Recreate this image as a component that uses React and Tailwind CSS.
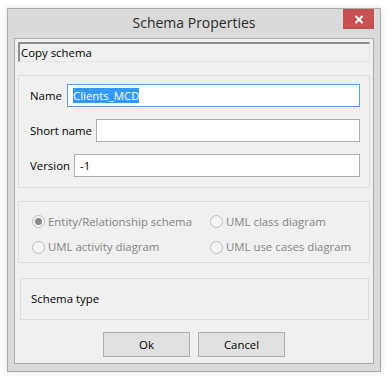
import React from "react";

const font = "font-['Open_Sans','Noto_Sans',sans-serif]";

function Radio({ checked, label }) {
  return (
    <div className="flex items-center h-[21px]">
      <span className="w-[13px] h-[13px] rounded-full border border-[#bcbcbc] bg-[#f4f4f4] flex items-center justify-center shrink-0">
        {checked && <span className="w-[7px] h-[7px] rounded-full bg-[#8a8a8a]" />}
      </span>
      <span className="ml-[3px] text-[#838383] text-[11.4px] leading-none">{label}</span>
    </div>
  );
}

export default function App() {
  return (
    <div className={`w-[388px] h-[378px] bg-white pt-[8px] pl-[7px] ${font}`}>
      <div className="w-[374px] h-[364px] border border-[#aaaaaa] bg-[#dadada] flex flex-col shadow-[0_0_6px_rgba(0,0,0,0.12)]">
        <div className="relative h-[29px] flex items-center justify-center shrink-0">
          <span className="text-[14px] text-[#2b2b2b] leading-none -mt-[1px]">Schema Properties</span>
          <div className="absolute top-0 right-[6px] w-[31px] h-[20px] bg-[#c75050] flex items-center justify-center">
            <svg width="10" height="9" viewBox="0 0 10 9">
              <path d="M1.5 1 L8.5 8 M8.5 1 L1.5 8" stroke="white" strokeWidth="2" />
            </svg>
          </div>
        </div>
        <div className="mx-[6px] mb-[7px] flex-1 border border-[#acacac] bg-[#f0f0f0] flex flex-col pt-[3px] px-[3px] text-[11.4px]">
          <div className="h-[20px] border-t-2 border-l-2 border-t-[#8c8c8c] border-l-[#8c8c8c] border-b border-r border-b-[#e3e3e3] border-r-[#e3e3e3] flex items-center pl-[1px] text-black leading-none">
            Copy schema
          </div>

          <div className="mt-[13px] h-[113px] border border-[#dcdcdc] flex flex-col pt-[8px] pl-[11px] pr-[9px] gap-[12px] text-black">
            <div className="flex items-center h-[23px]">
              <span className="w-[37px] leading-none">Name</span>
              <div className="flex-1 h-[23px] border border-[#569de5] bg-white flex items-center pl-[5px]">
                <span className="bg-[#3399ff] text-white leading-[15px]">Clients_MCD</span>
              </div>
            </div>
            <div className="flex items-center h-[23px]">
              <span className="w-[66px] leading-none">Short name</span>
              <div className="flex-1 h-[23px] border border-[#abadb3] bg-white" />
            </div>
            <div className="flex items-center h-[23px]">
              <span className="w-[44px] leading-none">Version</span>
              <div className="flex-1 h-[23px] border border-[#abadb3] bg-white flex items-center pl-[5px] leading-none">
                -1
              </div>
            </div>
          </div>

          <div className="mt-[13px] h-[62px] border border-[#dcdcdc] pt-[9px] pl-[13px] grid grid-cols-[178px_1fr]">
            <Radio checked label="Entity/Relationship schema" />
            <Radio label="UML class diagram" />
            <Radio label="UML activity diagram" />
            <Radio label="UML use cases diagram" />
          </div>

          <div className="mt-[15px] ml-[2px] mr-[1px] h-[42px] border border-[#dcdcdc] flex items-center pl-[10px] text-black leading-none">
            Schema type
          </div>

          <div className="mt-[12px] flex justify-center gap-[8px]">
            <button className="w-[87px] h-[25px] border border-[#adadad] bg-[#e1e1e1] text-black leading-none">Ok</button>
            <button className="w-[87px] h-[25px] border border-[#adadad] bg-[#e1e1e1] text-black leading-none">Cancel</button>
          </div>
        </div>
      </div>
    </div>
  );
}
